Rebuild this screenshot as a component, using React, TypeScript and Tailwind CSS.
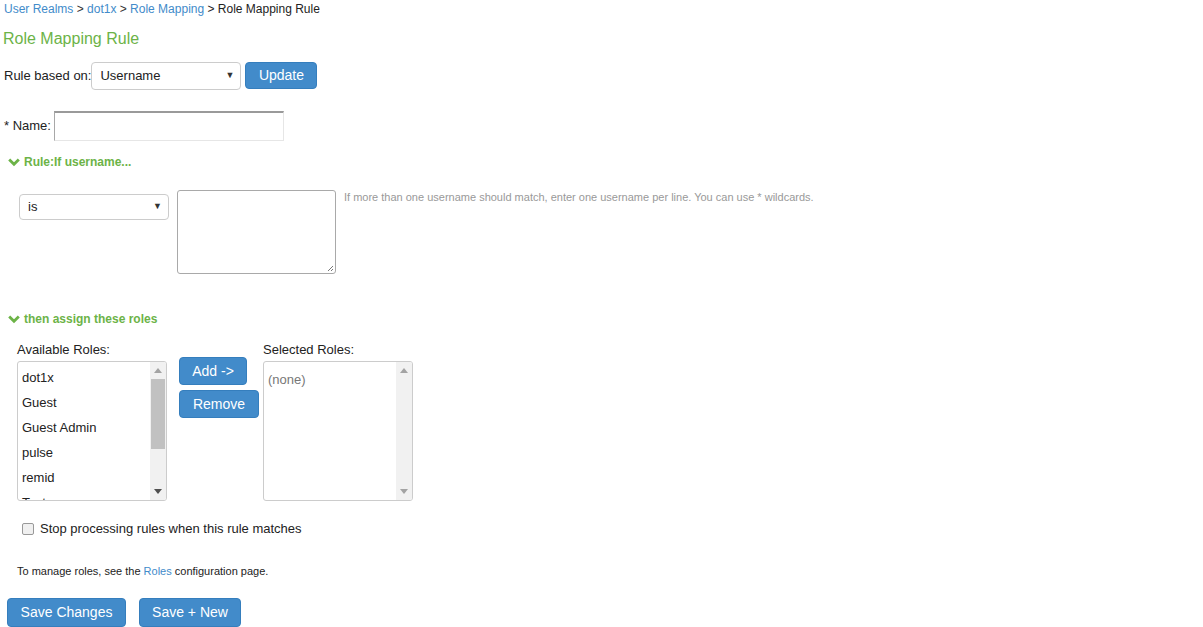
import React from 'react';

const Chevron = () => (
  <svg width="12" height="10" viewBox="0 0 12 10" className="inline-block">
    <path d="M1.2 2.5 L6 7.3 L10.8 2.5" fill="none" stroke="#6cb347" strokeWidth="2.8" />
  </svg>
);

const FakeSelect = ({ value, className }: { value: string; className: string }) => (
  <div className={`flex items-center justify-between border border-[#ccc] rounded-[4px] bg-white text-[13px] text-[#222] pl-[8px] pr-[6px] ${className}`}>
    <span>{value}</span>
    <span className="text-[9px] text-[#333]">▼</span>
  </div>
);

const Scrollbar = ({ thumb }: { thumb: boolean }) => (
  <div className="w-[16px] h-full bg-[#f1f1f1] flex flex-col items-center">
    <div className="h-[17px] flex items-center justify-center">
      <svg width="8" height="5" viewBox="0 0 8 5"><path d="M0 5 L4 0 L8 5 Z" fill="#a3a3a3" /></svg>
    </div>
    <div className="flex-1 w-full px-[1px]">
      {thumb && <div className="h-[70px] bg-[#c1c1c1]" />}
    </div>
    <div className="h-[17px] flex items-center justify-center">
      <svg width="8" height="5" viewBox="0 0 8 5"><path d="M0 0 L8 0 L4 5 Z" fill={thumb ? '#505050' : '#a3a3a3'} /></svg>
    </div>
  </div>
);

const Btn = ({ children, className = '' }: { children: React.ReactNode; className?: string }) => (
  <button className={`bg-[#428bca] border border-[#357ebd] text-white text-[14px] rounded-[4px] ${className}`}>
    {children}
  </button>
);

export default function App() {
  const roles = ['dot1x', 'Guest', 'Guest Admin', 'pulse', 'remid', 'Test'];
  return (
    <div className="w-[1203px] h-[627px] overflow-hidden bg-white text-[#333] font-['Liberation_Sans',Arial,sans-serif]">
      {/* breadcrumb */}
      <div className="pl-[4px] pt-[1px] text-[12px] leading-[16px]">
        <span className="text-[#428bca]">User Realms</span>
        <span> &gt; </span>
        <span className="text-[#428bca]">dot1x</span>
        <span> &gt; </span>
        <span className="text-[#428bca]">Role Mapping</span>
        <span className="text-[#222]"> &gt; Role Mapping Rule</span>
      </div>

      <h1 className="pl-[3px] mt-[12px] text-[16px] leading-[20px] text-[#6cb347]">Role Mapping Rule</h1>

      <div className="flex items-center pl-[4px] mt-[13px] h-[28px]">
        <span className="text-[13px] text-[#222]">Rule based on:</span>
        <FakeSelect value="Username" className="w-[150px] h-[28px]" />
        <Btn className="ml-[4px] w-[72px] h-[27px] -mt-[2px]">Update</Btn>
      </div>

      <div className="flex items-center pl-[4px] mt-[21px] h-[30px]">
        <span className="text-[13px] text-[#222]">* Name:</span>
        <div className="ml-[3px] w-[230px] h-[30px] border border-[#e6e6e6] border-t-[#9a9a9a] border-l-[#a8a8a8] border-t-2" />
      </div>

      <div className="flex items-center pl-[8px] mt-[14px] h-[14px] text-[12px] font-bold text-[#6cb347] gap-[4px]">
        <Chevron />
        <span>Rule:If username...</span>
      </div>

      <div className="flex items-start pl-[19px] mt-[21px]">
        <FakeSelect value="is" className="mt-[4px] w-[150px] h-[26px]" />
        <div className="relative ml-[8px] w-[159px] h-[84px] border border-[#a9a9a9] rounded-[3px]">
          <svg className="absolute right-[1px] bottom-[1px]" width="7" height="7" viewBox="0 0 7 7">
            <path d="M6 1 L1 6 M6 4 L4 6" stroke="#777" strokeWidth="1" />
          </svg>
        </div>
        <span className="ml-[8px] -mt-[1px] text-[11px] text-[#999]">
          If more than one username should match, enter one username per line. You can use * wildcards.
        </span>
      </div>

      <div className="flex items-center pl-[8px] mt-[38px] h-[14px] text-[12px] font-bold text-[#6cb347] gap-[4px]">
        <Chevron />
        <span>then assign these roles</span>
      </div>

      <div className="flex items-start pl-[17px] mt-[16px]">
        <div className="flex flex-col">
          <span className="text-[13px] leading-[15px] text-[#222]">Available Roles:</span>
          <div className="mt-[4px] w-[150px] h-[140px] border border-[#ccc] rounded-[3px] flex overflow-hidden">
            <div className="flex-1 pl-[4px] pt-[8px] text-[13px] text-[#222] overflow-hidden">
              {roles.map((r) => (
                <div key={r} className="h-[25px] leading-[15px]">{r}</div>
              ))}
            </div>
            <Scrollbar thumb />
          </div>
        </div>

        <div className="flex flex-col items-start ml-[12px] mt-[15px] gap-[5px]">
          <Btn className="w-[68px] h-[28px]">Add -&gt;</Btn>
          <Btn className="w-[80px] h-[28px]">Remove</Btn>
        </div>

        <div className="flex flex-col ml-[4px]">
          <span className="text-[13px] leading-[15px] text-[#222]">Selected Roles:</span>
          <div className="mt-[4px] w-[150px] h-[140px] border border-[#ccc] rounded-[3px] flex overflow-hidden">
            <div className="flex-1 pl-[4px] pt-[8px] text-[13px] text-[#777]">(none)</div>
            <Scrollbar thumb={false} />
          </div>
        </div>
      </div>

      <label className="flex items-center pl-[22px] mt-[20px] h-[16px] gap-[6px]">
        <span className="w-[12px] h-[12px] border border-[#999] rounded-[2px] bg-[#f0f0f0]" />
        <span className="text-[13px] text-[#222]">Stop processing rules when this rule matches</span>
      </label>

      <p className="pl-[17px] mt-[27px] text-[11px] leading-[14px] text-[#222]">
        To manage roles, see the <span className="text-[#428bca]">Roles</span> configuration page.
      </p>

      <div className="flex items-center pl-[7px] mt-[20px] gap-[13px]">
        <Btn className="w-[119px] h-[29px]">Save Changes</Btn>
        <Btn className="w-[102px] h-[29px]">Save + New</Btn>
      </div>
    </div>
  );
}
